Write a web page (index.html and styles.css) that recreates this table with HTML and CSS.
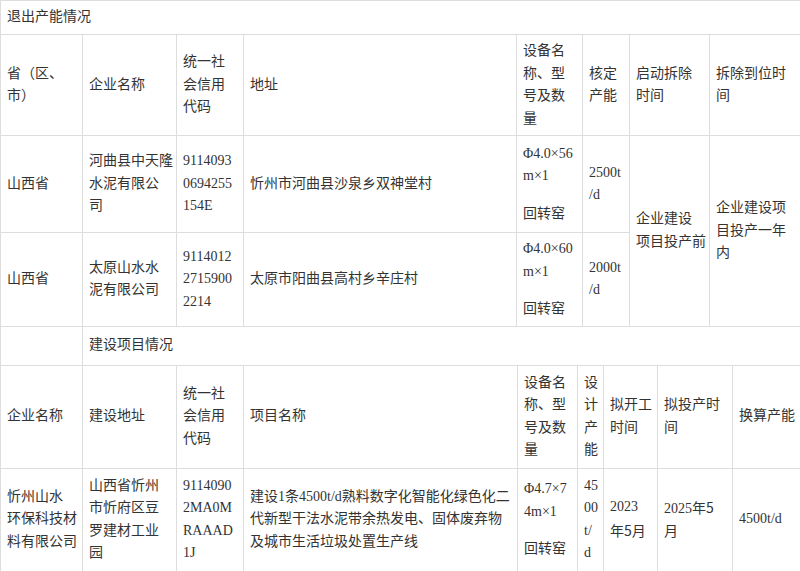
FILE: index.html
```html
<!DOCTYPE html>
<html lang="zh-CN">
<head>
<meta charset="utf-8">
<title>退出产能情况</title>
<link rel="stylesheet" href="styles.css">
</head>
<body>
<table class="grid">
  <colgroup>
    <col class="c82"><col class="c94"><col class="c67"><col class="c273"><col class="c66"><col class="c47"><col class="c80"><col class="c91">
  </colgroup>
  <tr class="r-title"><td colspan="8">退出产能情况</td></tr>
  <tr class="r-head1">
    <td>省（区、<br>市）</td>
    <td>企业名称</td>
    <td>统一社<br>会信用<br>代码</td>
    <td>地址</td>
    <td>设备名<br>称、型<br>号及数<br>量</td>
    <td>核定<br>产能</td>
    <td>启动拆除<br>时间</td>
    <td>拆除到位时<br>间</td>
  </tr>
  <tr class="r-data1">
    <td>山西省</td>
    <td>河曲县中天隆<br>水泥有限公<br>司</td>
    <td>9114093<br>0694255<br>154E</td>
    <td>忻州市河曲县沙泉乡双神堂村</td>
    <td>Φ4.0×56<br>m×1<div class="gap">回转窑</div></td>
    <td>2500t<br>/d</td>
    <td rowspan="2">企业建设<br>项目投产前</td>
    <td rowspan="2">企业建设项<br>目投产一年<br>内</td>
  </tr>
  <tr class="r-data2">
    <td>山西省</td>
    <td>太原山水水<br>泥有限公司</td>
    <td>9114012<br>2715900<br>2214</td>
    <td>太原市阳曲县高村乡辛庄村</td>
    <td>Φ4.0×60<br>m×1<div class="gap">回转窑</div></td>
    <td>2000t<br>/d</td>
  </tr>
</table>
<table class="grid second">
  <colgroup>
    <col class="c82"><col class="c94"><col class="c67"><col class="c274"><col class="c60"><col class="c26"><col class="c54"><col class="c75"><col class="c68">
  </colgroup>
  <tr class="r-sub"><td></td><td colspan="8">建设项目情况</td></tr>
  <tr class="r-head2">
    <td>企业名称</td>
    <td>建设地址</td>
    <td>统一社<br>会信用<br>代码</td>
    <td>项目名称</td>
    <td>设备名<br>称、型<br>号及数<br>量</td>
    <td>设<br>计<br>产<br>能</td>
    <td>拟开工<br>时间</td>
    <td>拟投产时<br>间</td>
    <td>换算产能</td>
  </tr>
  <tr class="r-data3">
    <td>忻州山水<br>环保科技材<br>料有限公司</td>
    <td>山西省忻州<br>市忻府区豆<br>罗建材工业<br>园</td>
    <td>9114090<br>2MA0M<br>RAAAD<br>1J</td>
    <td>建设1条4500t/d熟料数字化智能化绿色化二<br>代新型干法水泥带余热发电、固体废弃物<br>及城市生活垃圾处置生产线</td>
    <td>Φ4.7×7<br>4m×1<div class="gap">回转窑</div></td>
    <td>45<br>00<br>t/<br>d</td>
    <td>2023<br><span class="cn">年5月</span></td>
    <td>2025年<span class="cn">5</span><br>月</td>
    <td>4500t/d</td>
  </tr>
</table>
</body>
</html>
```
FILE: styles.css
```css
html, body {
  margin: 0;
  padding: 0;
  background: #ffffff;
}

body {
  font-family: "Liberation Serif", "Noto Sans CJK SC", serif;
  font-size: 14px;
  line-height: 22.5px;
  color: #333333;
}

.grid {
  width: 800px;
  border-collapse: collapse;
  table-layout: fixed;
}

.grid td {
  border: 1px solid #dddddd;
  padding: 5px 6px;
  vertical-align: middle;
  text-align: left;
  white-space: nowrap;
  overflow: visible;
}

.second {
  margin-top: -1px;
}

.gap {
  margin-top: 15px;
}

.cn {
  font-family: "Noto Sans CJK SC", sans-serif;
}

.c82 { width: 82px; }
.c94 { width: 94px; }
.c67 { width: 67px; }
.c273 { width: 273px; }
.c274 { width: 274px; }
.c66 { width: 66px; }
.c47 { width: 47px; }
.c80 { width: 80px; }
.c91 { width: 91px; }
.c60 { width: 60px; }
.c26 { width: 26px; }
.c54 { width: 54px; }
.c75 { width: 75px; }
.c68 { width: 68px; }

.r-title { height: 34px; }
.r-head1 { height: 101px; }
.r-data1 { height: 97px; }
.r-data2 { height: 92px; }
.r-sub { height: 39px; }
.r-head2 { height: 103px; }
.r-data3 { height: 103px; }
```
